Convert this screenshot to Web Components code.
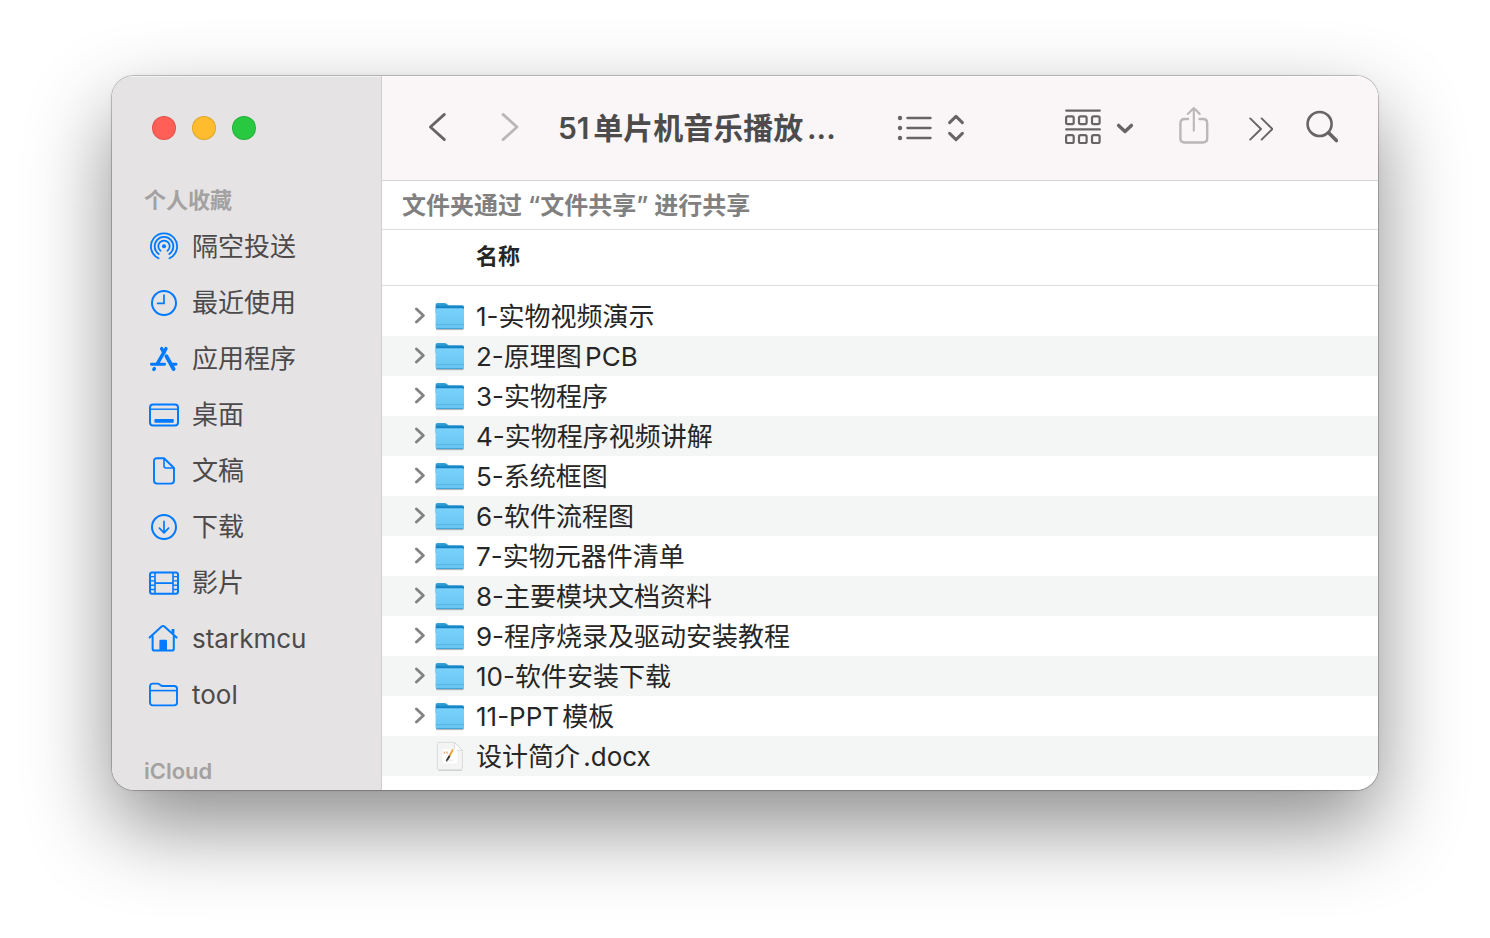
<!DOCTYPE html>
<html lang="zh-CN">
<head>
	<meta charset="UTF-8">
	<meta name="viewport" content="width=device-width, initial-scale=1.0">
	<title>51单片机音乐播放</title>
	<style>
		body {
			margin: 0;
			background: #fff;
			font-family: Inter, 'Noto Sans CJK SC', sans-serif;
			font-size: 26px;
			color: #262626;
			text-autospace: normal;
		}
	</style>
</head>
<body>
	<finder-window>
		<finder-sidebar slot="sidebar"></finder-sidebar>
		<finder-toolbar slot="main">51单片机音乐播放...</finder-toolbar>
		<finder-banner slot="main">文件夹通过 “文件共享” 进行共享</finder-banner>
		<finder-list slot="main"></finder-list>
	</finder-window>

	<script>
		const icons = {
			airdrop: `
				<g fill="none" stroke="currentColor" stroke-width="1.8" stroke-linecap="round">
					<path d="M10.5 27.3 A13.1 13.1 0 1 1 21.5 27.3" />
					<path d="M10.7 23 A9.35 9.35 0 1 1 21.3 23" />
					<path d="M12.5 19.8 A5.7 5.7 0 1 1 19.5 19.8" />
				</g>
				<circle cx="16" cy="15.3" r="2" fill="currentColor" />`,
			clock: `
				<g fill="none" stroke="currentColor" stroke-width="2" stroke-linecap="round">
					<circle cx="16" cy="16" r="12" />
					<path d="M16 8 V16.4 H9.6" stroke-width="1.7" />
				</g>`,
			apps: `
				<g fill="none" stroke="currentColor" stroke-width="3.4" stroke-linecap="round">
					<path d="M18 5.6 L9.4 20.6" />
					<path d="M13.6 5.6 L16 9.6" />
					<path d="M18.4 13.2 L25.6 26" stroke-width="3.8" />
					<path d="M3.4 21.2 H16.6 M23.6 21.2 H28" stroke-width="2.9" />
					<path d="M5.8 26.4 L6.4 25.6" />
				</g>`,
			desktop: `
				<rect x="2" y="5.6" width="28" height="21" rx="3" fill="none" stroke="currentColor" stroke-width="2" />
				<path d="M2 10.2 H30" stroke="currentColor" stroke-width="1.4" />
				<rect x="6.4" y="20" width="19.4" height="3.8" rx="1" fill="currentColor" />`,
			doc: `
				<g fill="none" stroke="currentColor" stroke-width="1.9" stroke-linejoin="round">
					<path d="M9 3.2 H16 L26 13 V25.6 Q26 28.6 23 28.6 H9 Q6 28.6 6 25.6 V6.2 Q6 3.2 9 3.2 Z" />
					<path d="M16 3.2 V11 Q16 13 18 13 H26" stroke-width="1.6" />
				</g>`,
			download: `
				<g fill="none" stroke="currentColor" stroke-width="2" stroke-linecap="round" stroke-linejoin="round">
					<circle cx="16" cy="16" r="12" />
					<path d="M16 10.4 V21.6 M11.4 17.2 L16 21.8 L20.6 17.2" stroke-width="1.7" />
				</g>`,
			movie: `
				<g fill="none" stroke="currentColor" stroke-width="2">
					<rect x="2" y="5.4" width="28" height="21.4" rx="2" />
					<path d="M7 5.4 V26.8 M25 5.4 V26.8 M7 16.1 H25" stroke-width="1.6" />
					<path d="M2 9.6 H7 M2 13.9 H7 M2 18.2 H7 M2 22.5 H7 M25 9.6 H30 M25 13.9 H30 M25 18.2 H30 M25 22.5 H30" stroke-width="1.4" />
				</g>`,
			home: `
				<g fill="none" stroke="currentColor" stroke-width="2" stroke-linecap="round" stroke-linejoin="round">
					<path d="M1.6 14.6 L13.6 3.6 Q15 2.4 16.4 3.6 L28.6 14.6" />
					<path d="M4.6 13 V25.4 Q4.6 27.6 6.8 27.6 H23.6 Q25.8 27.6 25.8 25.4 V13" />
					<path d="M25 6 V10.6" stroke-width="2.8" stroke-linecap="butt" />
				</g>
				<path d="M11.4 28 V18 Q11.4 16.8 12.6 16.8 H17.8 Q19 16.8 19 18 V28 Z" fill="currentColor" />`,
			folder: `
				<g fill="none" stroke="currentColor" stroke-width="1.9" stroke-linejoin="round">
					<path d="M2 23.6 V7.4 Q2 4.6 4.8 4.6 H9.4 Q10.8 4.6 11.8 5.6 L12.6 6.3 Q13.4 7 14.8 7 H26.2 Q29 7 29 9.8 V23.6 Q29 26.4 26.2 26.4 H4.8 Q2 26.4 2 23.6 Z" />
					<path d="M2 11.6 H29" stroke-width="1.6" />
				</g>`,
		};

		class FinderWindow extends HTMLElement {
			constructor() {
				super();
				this.attachShadow({ mode: 'open' });
			}

			static get style() {
				return /*css*/ `
				:host {
					display: block;
					padding: 76px 112px 148px;
				}

				.window {
					display: grid;
					grid-template-columns: 270px 1fr;
					border-radius: 22px;
					overflow: hidden;
				}

				.frame {
					border-radius: 22px;
					box-shadow:
						0 0 0 1px rgba(0, 0, 0, 0.2),
						0 0 4px rgba(0, 0, 0, 0.08),
						0 36px 84px rgba(0, 0, 0, 0.45);
				}

				.main {
					min-width: 0;
					background: #fff;
				}
				`;
			}

			connectedCallback() {
				this.shadowRoot.innerHTML = /*html*/ `
				<style>${FinderWindow.style}</style>
				<div class="frame">
					<div class="window">
						<slot name="sidebar"></slot>
						<main class="main"><slot name="main"></slot></main>
					</div>
				</div>`;
			}
		}

		class FinderSidebar extends HTMLElement {
			constructor() {
				super();
				this.attachShadow({ mode: 'open' });
				this.items = [
					['airdrop', '隔空投送'],
					['clock', '最近使用'],
					['apps', '应用程序'],
					['desktop', '桌面'],
					['doc', '文稿'],
					['download', '下载'],
					['movie', '影片'],
					['home', 'starkmcu'],
					['folder', 'tool'],
				];
			}

			static get style() {
				return /*css*/ `
				:host {
					display: block;
					box-sizing: border-box;
					background: #e5e3e4;
					border-right: 1px solid #d0cecf;
					box-shadow: inset 0 1px 0 #f3f2f2;
				}

				.lights {
					display: flex;
					align-items: center;
					gap: 16px;
					height: 104px;
					padding-left: 40px;
				}

				.lights button {
					width: 24px;
					height: 24px;
					padding: 0;
					border: 1px solid rgba(0, 0, 0, 0.12);
					border-radius: 50%;
				}

				.close { background: #ff5f57; }
				.minimize { background: #febc2e; }
				.zoom { background: #28c840; }

				h2 {
					margin: 0;
					padding: 1px 0 0 32px;
					font-size: 22px;
					line-height: 38px;
					font-weight: 600;
					color: #a3a1a2;
				}

				ul {
					margin: 0 0 28px;
					padding: 0;
					list-style: none;
				}
				`;
			}

			connectedCallback() {
				this.shadowRoot.innerHTML = /*html*/ `
				<style>${FinderSidebar.style}</style>
				<div class="lights">
					<button class="close" aria-label="关闭"></button>
					<button class="minimize" aria-label="最小化"></button>
					<button class="zoom" aria-label="缩放"></button>
				</div>
				<nav>
					<h2>个人收藏</h2>
					<ul>
						${this.items.map(([icon, name]) => `<li><sidebar-item icon="${icon}">${name}</sidebar-item></li>`).join('')}
					</ul>
					<h2>iCloud</h2>
				</nav>`;
			}
		}

		class SidebarItem extends HTMLElement {
			constructor() {
				super();
				this.attachShadow({ mode: 'open' });
			}

			static get style() {
				return /*css*/ `
				:host {
					display: block;
				}

				a {
					display: flex;
					align-items: center;
					gap: 12px;
					height: 56px;
					padding-left: 36px;
					line-height: 32px;
					color: #4c4a4b;
					text-decoration: none;
				}

				svg {
					flex: none;
					color: #007aff;
				}
				`;
			}

			connectedCallback() {
				this.shadowRoot.innerHTML = /*html*/ `
				<style>${SidebarItem.style}</style>
				<a href="#">
					<svg width="32" height="32" viewBox="0 0 32 32" aria-hidden="true">${icons[this.getAttribute('icon')]}</svg>
					<slot></slot>
				</a>`;
			}
		}

		class FinderToolbar extends HTMLElement {
			constructor() {
				super();
				this.attachShadow({ mode: 'open' });
			}

			static get style() {
				return /*css*/ `
				:host {
					display: flex;
					align-items: center;
					height: 104px;
					padding: 0 40px 0 44px;
					background: #faf6f7;
					border-bottom: 1px solid #d9d6d7;
					box-shadow: inset 0 1px 0 #fff;
				}

				button {
					display: flex;
					padding: 0;
					border: 0;
					background: none;
					color: #666465;
				}

				button:disabled {
					color: #b9b7b8;
				}

				svg {
					fill: none;
					stroke: currentColor;
					stroke-linecap: round;
					stroke-linejoin: round;
				}

				.history {
					display: flex;
					gap: 48px;
					margin-right: 36px;
				}

				h1 {
					min-width: 282px;
					margin: 0;
					font-size: 30px;
					line-height: 38px;
					font-weight: 600;
					color: #4d4b4c;
					white-space: nowrap;
				}

				.view {
					margin-left: 56px;
				}

				.actions {
					display: flex;
					align-items: center;
					gap: 33px;
					margin-left: auto;
				}
				`;
			}

			connectedCallback() {
				this.shadowRoot.innerHTML = /*html*/ `
				<style>${FinderToolbar.style}</style>
				<div class="history">
					<button aria-label="返回">
						<svg width="24" height="32" viewBox="0 0 24 32" stroke-width="2.8"><path d="M18.4 2.4 L4.4 15 L18.4 27.6" /></svg>
					</button>
					<button aria-label="前进" disabled>
						<svg width="24" height="32" viewBox="0 0 24 32" stroke-width="2.8"><path d="M5 2.4 L19 15 L5 27.6" /></svg>
					</button>
				</div>
				<h1><slot></slot></h1>
				<button class="view" aria-label="显示方式" aria-haspopup="menu">
					<svg width="72" height="32" viewBox="0 0 72 32" stroke-width="2.3">
						<g fill="currentColor" stroke="none">
							<circle cx="4" cy="6" r="2.2" />
							<circle cx="4" cy="16" r="2.2" />
							<circle cx="4" cy="26" r="2.2" />
						</g>
						<path d="M11.4 6 H34.6 M11.4 16 H34.6 M11.4 26 H34.6" />
						<path d="M53.6 10.6 L60 4.4 L66.4 10.6 M53.6 21.4 L60 27.6 L66.4 21.4" stroke-width="3" />
					</svg>
				</button>
				<div class="actions">
					<button aria-label="分组" aria-haspopup="menu">
						<svg width="80" height="40" viewBox="0 0 80 40" stroke-width="2.3">
							<path d="M3.2 2.6 H36.8 M3.2 21.4 H36.8" />
							<g stroke-width="2.2">
								<rect x="3.1" y="8.4" width="7.6" height="7.8" rx="1.6" />
								<rect x="16" y="8.4" width="7.6" height="7.8" rx="1.6" />
								<rect x="29" y="8.4" width="7.6" height="7.8" rx="1.6" />
								<rect x="3.1" y="27.2" width="7.6" height="7.8" rx="1.6" />
								<rect x="16" y="27.2" width="7.6" height="7.8" rx="1.6" />
								<rect x="29" y="27.2" width="7.6" height="7.8" rx="1.6" />
							</g>
							<path d="M55.6 17.4 L62 23.4 L68.4 17.4" stroke-width="3.4" />
						</svg>
					</button>
					<button aria-label="共享" disabled>
						<svg width="40" height="44" viewBox="0 0 40 44" stroke-width="2.4">
							<path d="M12 13 H8.6 Q4.4 13 4.4 17.2 V32.3 Q4.4 36.5 8.6 36.5 H27 Q31.2 36.5 31.2 32.3 V17.2 Q31.2 13 27 13 H23.6" />
							<path d="M17.8 24.6 V2.2 M11.8 8 L17.8 2 L23.8 8" stroke-width="2.1" />
						</svg>
					</button>
					<button aria-label="更多">
						<svg width="24" height="32" viewBox="0 0 24 32" stroke-width="1.9"><path d="M1.2 6.4 L12 17 L1.2 27.6 M12.6 6.4 L23.4 17 L12.6 27.6" /></svg>
					</button>
					<button aria-label="搜索">
						<svg width="32" height="36" viewBox="0 0 32 36" stroke-width="2.6">
							<circle cx="13.6" cy="14" r="12" />
							<path d="M22.6 22.8 L30.4 30.6" stroke-width="3.6" />
						</svg>
					</button>
				</div>`;
			}
		}

		class FinderBanner extends HTMLElement {
			constructor() {
				super();
				this.attachShadow({ mode: 'open' });
			}

			connectedCallback() {
				this.shadowRoot.innerHTML = /*html*/ `
				<style>
					:host {
						display: block;
						padding: 2px 0 0 20px;
						border-bottom: 1px solid #dedede;
						font-size: 24px;
						line-height: 46px;
						font-weight: 600;
						color: #808080;
					}
				</style>
				<slot></slot>`;
			}
		}

		class FileIcon extends HTMLElement {
			constructor() {
				super();
				this.attachShadow({ mode: 'open' });
			}

			get folder() {
				return `
				<defs>
					<linearGradient id="back" x1="0" y1="0" x2="0" y2="1">
						<stop offset="0" stop-color="#3ba6dc" />
						<stop offset="0.5" stop-color="#0c7fc3" />
					</linearGradient>
					<linearGradient id="front" x1="0" y1="0" x2="0" y2="1">
						<stop offset="0" stop-color="#7ad2fc" />
						<stop offset="1" stop-color="#66c3f0" />
					</linearGradient>
				</defs>
				<path d="M2.4 29.6 H29.4" stroke="#000" stroke-opacity="0.25" stroke-width="1.2" />
				<path d="M1.6 4.6 Q1.6 3 3.2 3 H10.6 Q11.8 3 12.6 3.8 L13.4 4.6 Q14 5.2 15.2 5.2 H28.2 Q30 5.2 30 7 V13 H1.6 Z" fill="url(#back)" />
				<path d="M1.6 9.6 Q1.6 8.2 3 8.2 H28.6 Q30 8.2 30 9.6 V27.2 Q30 29 28.2 29 H3.4 Q1.6 29 1.6 27.2 Z" fill="url(#front)" />
				<path d="M1.6 24.6 H30" stroke="#4fb2e2" stroke-width="0.8" />
				<path d="M2 28.6 H29.6" stroke="#3c9fd3" stroke-width="0.9" />`;
			}

			get docx() {
				return `
				<path d="M4.4 30.2 H28" stroke="#000" stroke-opacity="0.2" />
				<path d="M4.6 2.4 H20.6 L28.4 10.4 V28.2 Q28.4 29.8 26.8 29.8 H5 Q3.4 29.8 3.4 28.2 V3.6 Q3.4 2.4 4.6 2.4 Z" fill="#f4f4f4" stroke="#d4d4d4" stroke-width="0.8" />
				<path d="M20.6 2.4 L28.4 10.4 H22 Q20.6 10.4 20.6 9 Z" fill="#fff" stroke="#cfcfcf" stroke-width="0.7" />
				<rect x="8" y="9" width="15.4" height="14.6" rx="3.4" fill="#fff" />
				<path d="M9.6 12.6 H11.2 M12.2 12.6 H13.8" stroke="#f3b584" stroke-width="2.4" />
				<path d="M19 9.4 L15 17" stroke="#f0a03c" stroke-width="2" />
				<path d="M15.2 16.6 L12.8 20.6" stroke="#333" stroke-width="1.9" stroke-linecap="round" />
				<path d="M12.6 20.8 L19 20.4" stroke="#ddd" stroke-width="0.6" />`;
			}

			connectedCallback() {
				this.shadowRoot.innerHTML = /*html*/ `
				<style>
					:host {
						display: block;
						width: 32px;
						height: 32px;
					}
				</style>
				<svg width="32" height="32" viewBox="0 0 32 32" fill="none" aria-hidden="true">${this[this.getAttribute('type')]}</svg>`;
			}
		}

		class FinderList extends HTMLElement {
			constructor() {
				super();
				this.attachShadow({ mode: 'open' });
				this.files = [
					'1-实物视频演示',
					'2-原理图PCB',
					'3-实物程序',
					'4-实物程序视频讲解',
					'5-系统框图',
					'6-软件流程图',
					'7-实物元器件清单',
					'8-主要模块文档资料',
					'9-程序烧录及驱动安装教程',
					'10-软件安装下载',
					'11-PPT模板',
					'设计简介.docx',
				];
			}

			static get style() {
				return /*css*/ `
				:host {
					display: block;
					padding-bottom: 14px;
				}

				table {
					width: 100%;
					border-collapse: collapse;
				}

				th {
					height: 51px;
					padding: 0 0 4px 94px;
					border-bottom: 1px solid #dedede;
					font-size: 22px;
					line-height: 32px;
					font-weight: 600;
					text-align: left;
				}

				tbody::before {
					content: '';
					display: block;
					height: 10px;
				}

				td {
					padding: 0;
				}

				tbody tr:nth-child(even) {
					background: #f4f5f5;
				}

				.name {
					display: grid;
					grid-template-columns: 16px 32px 1fr;
					align-items: center;
					height: 40px;
					padding-left: 30px;
					column-gap: 6px;
				}

				.name span {
					padding: 2px 0 0 4px;
					line-height: 38px;
					white-space: nowrap;
				}

				file-icon {
					grid-column: 2;
				}

				button {
					display: flex;
					padding: 0;
					border: 0;
					background: none;
					color: #828282;
				}
				`;
			}

			createRow(name) {
				const isFile = name.includes('.');
				const toggle = `
				<button aria-label="展开">
					<svg width="16" height="24" viewBox="0 0 16 24" fill="none" stroke="currentColor" stroke-width="2.8" stroke-linecap="round" stroke-linejoin="round"><path d="M4.4 5 L11.4 11.5 L4.4 18" /></svg>
				</button>`;
				return /*html*/ `
				<tr>
					<td>
						<div class="name">
							${isFile ? '' : toggle}
							<file-icon type="${isFile ? 'docx' : 'folder'}"></file-icon>
							<span>${name}</span>
						</div>
					</td>
				</tr>`;
			}

			connectedCallback() {
				this.shadowRoot.innerHTML = /*html*/ `
				<style>${FinderList.style}</style>
				<table>
					<thead>
						<tr><th scope="col">名称</th></tr>
					</thead>
					<tbody>
						${this.files.map((name) => this.createRow(name)).join('')}
					</tbody>
				</table>`;
			}
		}

		customElements.define('finder-window', FinderWindow);
		customElements.define('finder-sidebar', FinderSidebar);
		customElements.define('sidebar-item', SidebarItem);
		customElements.define('finder-toolbar', FinderToolbar);
		customElements.define('finder-banner', FinderBanner);
		customElements.define('file-icon', FileIcon);
		customElements.define('finder-list', FinderList);
	</script>
</body>
</html>
